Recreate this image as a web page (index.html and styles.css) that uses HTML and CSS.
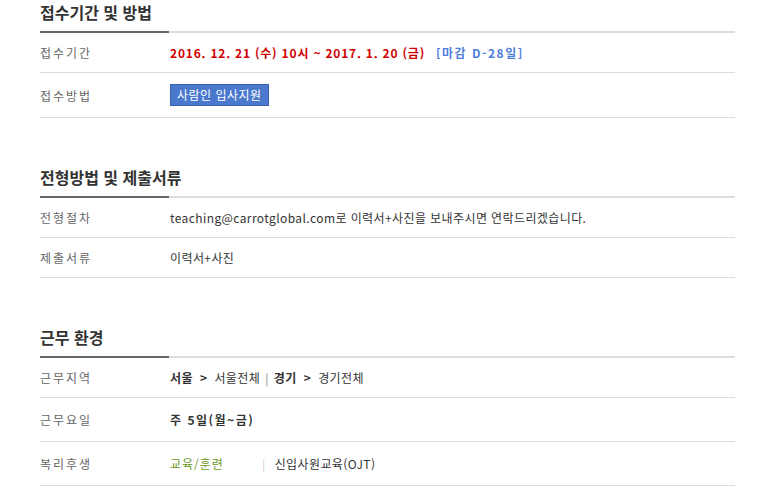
FILE: index.html
```html
<!DOCTYPE html>
<html lang="ko">
<head>
<meta charset="utf-8">
<title>채용 정보</title>
<link rel="stylesheet" href="styles.css">
</head>
<body>
<div class="page">
  <section class="sec">
    <h2 class="sec-title">접수기간 및 방법</h2>
    <div class="row">
      <div class="label">접수기간</div>
      <div class="value"><span class="date">2016. 12. 21 (수) 10시 ~ 2017. 1. 20 (금)</span><span class="dday">[마감 D-28일]</span></div>
    </div>
    <div class="row">
      <div class="label">접수방법</div>
      <div class="value"><span class="apply-btn">사람인 입사지원</span></div>
    </div>
  </section>

  <section class="sec">
    <h2 class="sec-title">전형방법 및 제출서류</h2>
    <div class="row">
      <div class="label">전형절차</div>
      <div class="value">teaching@carrotglobal.com로 이력서+사진을 보내주시면 연락드리겠습니다.</div>
    </div>
    <div class="row">
      <div class="label">제출서류</div>
      <div class="value">이력서+사진</div>
    </div>
  </section>

  <section class="sec">
    <h2 class="sec-title">근무 환경</h2>
    <div class="row">
      <div class="label">근무지역</div>
      <div class="value"><b>서울</b><span class="arrow">&gt;</span>서울전체<span class="bar">|</span><b>경기</b><span class="arrow">&gt;</span>경기전체</div>
    </div>
    <div class="row row-tall">
      <div class="label">근무요일</div>
      <div class="value"><b class="wide">주 5일(월~금)</b></div>
    </div>
    <div class="row row-tall">
      <div class="label">복리후생</div>
      <div class="value"><span class="welfare-cat">교육/훈련</span><span class="welfare-sep">|</span>신입사원교육(OJT)</div>
    </div>
  </section>
</div>
</body>
</html>
```

FILE: styles.css
```css
html, body {
  margin: 0;
  padding: 0;
  background: #fff;
}
body {
  font-family: "Noto Sans CJK KR", "Noto Sans", sans-serif;
  font-size: 12px;
  color: #333;
}
.page {
  width: 695px;
  padding-left: 40px;
}
.sec + .sec {
  margin-top: 47px;
}
.sec-title {
  margin: 0;
  font-size: 16px;
  line-height: 24px;
  font-weight: 700;
  color: #333;
  letter-spacing: 0;
  padding-bottom: 7px;
  border-bottom: 2px solid #ddd;
  position: relative;
}
.sec-title::after {
  content: "";
  position: absolute;
  left: 0;
  bottom: -2px;
  width: 129px;
  height: 2px;
  background: #666;
}
.row {
  display: flex;
  align-items: center;
  padding: 11px 0;
  min-height: 17px;
  border-bottom: 1px solid #ddd;
  line-height: 17px;
}
.row-tall {
  padding: 13px 0;
}
.label {
  width: 130px;
  flex: none;
  color: #666;
  letter-spacing: 2px;
}
.value {
  flex: 1;
  color: #333;
  letter-spacing: 0.4px;
}
.value b {
  font-weight: 700;
}
.value b.wide {
  letter-spacing: 1.5px;
}
.date {
  color: #d10000;
  font-weight: 700;
  letter-spacing: 0.8px;
}
.dday {
  color: #4f7fdc;
  font-weight: 700;
  margin-left: 11px;
  letter-spacing: 1.5px;
}
.apply-btn {
  display: inline-block;
  background: #4a78cc;
  border: 1px solid #3a62b0;
  color: #fff;
  padding: 0 6px;
  height: 20px;
  line-height: 20px;
  letter-spacing: 0.5px;
}
.arrow {
  margin: 0 7px;
  font-weight: 700;
}
.bar {
  margin: 0 5px;
  color: #888;
}
.welfare-cat {
  display: inline-block;
  width: 92px;
  color: #6a9a1f;
  letter-spacing: 1px;
}
.welfare-sep {
  color: #ccc;
  margin-right: 9px;
}
```
